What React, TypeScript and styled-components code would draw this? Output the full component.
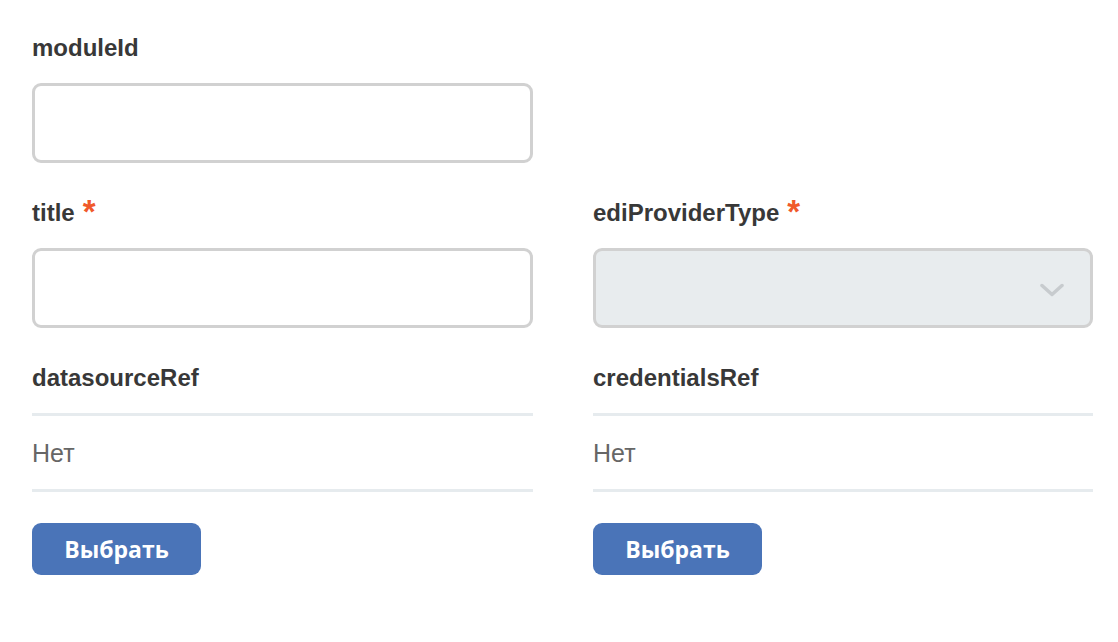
import React from "react";
import styled, { createGlobalStyle } from "styled-components";

const Global = createGlobalStyle`
  html, body { margin: 0; padding: 0; background: #ffffff; }
  body { font-family: "Liberation Sans", Arial, sans-serif; }
  * { box-sizing: border-box; }
`;

const Form = styled.div`
  width: 1093px;
  padding: 34px 0 0 32px;
  display: grid;
  grid-template-columns: 501px 500px;
  column-gap: 60px;
  align-items: start;
`;

const Field = styled.div<{ $mb?: number }>`
  display: flex;
  flex-direction: column;
  margin-bottom: ${(p) => p.$mb ?? 36}px;
`;

const Label = styled.div`
  font-family: "Liberation Sans", Arial, sans-serif;
  font-weight: 700;
  font-size: 24px;
  line-height: 28px;
  color: #383838;
  margin-bottom: 21px;
  display: flex;
  align-items: flex-start;
`;

const Required = styled.span`
  color: #f0592a;
  font-size: 33px;
  line-height: 28px;
  margin-left: 8px;
  position: relative;
  top: -1px;
`;

const Input = styled.input`
  height: 80px;
  width: 100%;
  border: 3px solid #d1d1d1;
  border-radius: 9px;
  background: #ffffff;
  font-size: 22px;
  padding: 0 16px;
  outline: none;
`;

const SelectBox = styled.div`
  height: 80px;
  width: 100%;
  border: 3px solid #d1d1d1;
  border-radius: 9px;
  background: #e8ecee;
  display: flex;
  align-items: center;
  justify-content: flex-end;
  padding-right: 26px;
  padding-top: 4px;
`;

const RefValue = styled.div`
  border-top: 3px solid #e6ebee;
  border-bottom: 3px solid #e6ebee;
  padding: 23px 0 22px;
  font-family: "Liberation Sans", Arial, sans-serif;
  font-size: 25px;
  line-height: 28px;
  color: #666666;
`;

const PickButton = styled.button`
  margin-top: 31px;
  align-self: flex-start;
  width: 169px;
  height: 52px;
  border: none;
  border-radius: 9px;
  background: #4a74b8;
  color: #ffffff;
  font-family: "Open Sans", sans-serif;
  font-weight: 700;
  font-size: 23px;
  line-height: 52px;
  padding: 0;
  cursor: pointer;
`;

const Empty = styled.div``;

const Chevron = () => (
  <svg width="24" height="15" viewBox="0 0 24 15" fill="none">
    <path
      d="M2 2.5 L12 11.5 L22 2.5"
      stroke="#c7cbce"
      strokeWidth="3.5"
      strokeLinecap="round"
      strokeLinejoin="round"
    />
  </svg>
);

export default function App() {
  return (
    <>
      <Global />
      <Form>
        <Field>
          <Label>moduleId</Label>
          <Input />
        </Field>
        <Empty />
        <Field $mb={36}>
          <Label>
            title<Required>*</Required>
          </Label>
          <Input />
        </Field>
        <Field $mb={36}>
          <Label>
            ediProviderType<Required>*</Required>
          </Label>
          <SelectBox>
            <Chevron />
          </SelectBox>
        </Field>
        <Field $mb={0}>
          <Label>datasourceRef</Label>
          <RefValue>Нет</RefValue>
          <PickButton>Выбрать</PickButton>
        </Field>
        <Field $mb={0}>
          <Label>credentialsRef</Label>
          <RefValue>Нет</RefValue>
          <PickButton>Выбрать</PickButton>
        </Field>
      </Form>
    </>
  );
}
